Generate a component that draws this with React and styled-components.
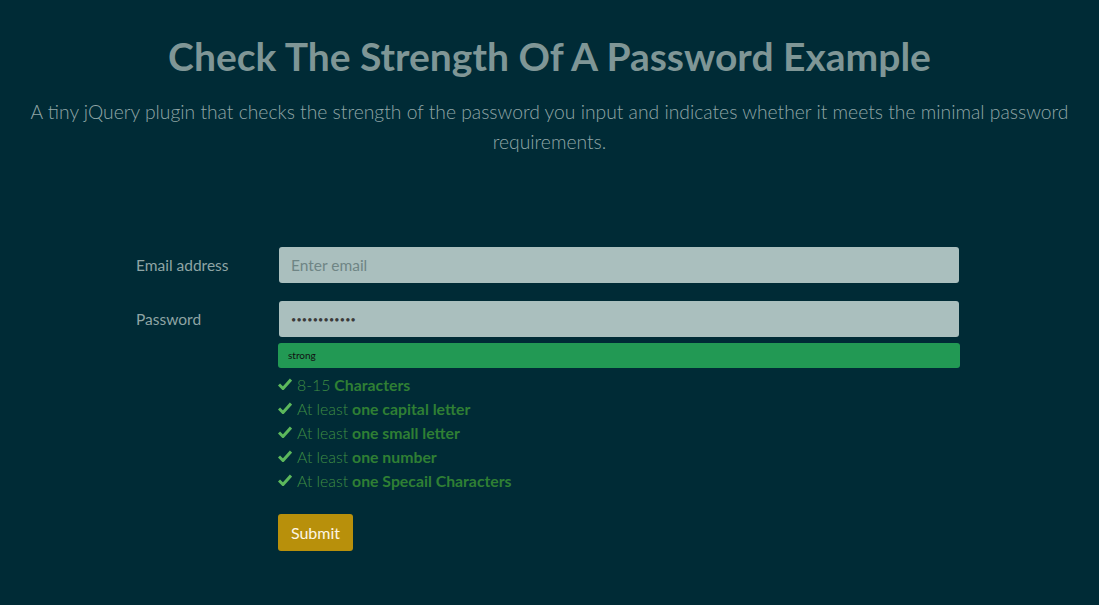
import React from "react";
import styled, { createGlobalStyle } from "styled-components";

const Global = createGlobalStyle`
  html, body { margin: 0; padding: 0; background: #002b36; }
  body { font-family: Lato, "Open Sans", sans-serif; color: #839496; }
  * { box-sizing: border-box; }
`;

const Page = styled.div`
  min-height: 605px;
  background: #002b36;
  padding-top: 32px;
`;

const Header = styled.header`
  text-align: center;
  padding: 0 20px;
`;

const Title = styled.h1`
  margin: 0;
  font-size: 39px;
  line-height: 48px;
  font-weight: 700;
  color: #7f9696;
`;

const Lead = styled.p`
  margin: 17px 0 0;
  font-size: 19.3px;
  line-height: 30px;
  font-weight: 300;
  color: #90a6a6;
`;

const Form = styled.form`
  width: 824px;
  margin: 90px 0 0 136px;
  display: flex;
  flex-direction: column;
`;

const Row = styled.div`
  display: grid;
  grid-template-columns: 143px 680px;
  align-items: start;
  margin-bottom: ${(p) => p.$gap || 0}px;
`;

const Label = styled.label`
  font-size: 15.5px;
  line-height: 36px;
  color: #8fa5a5;
`;

const Field = styled.div`
  display: flex;
  flex-direction: column;
`;

const Input = styled.input`
  width: 680px;
  height: 36px;
  border: none;
  border-radius: 3px;
  background: #aabfbe;
  padding: 0 12px;
  font-family: inherit;
  font-size: 15.5px;
  color: #444;
  outline: none;
  &::placeholder { color: #6f8585; }
  &[type="password"] {
    font-size: 9px;
    letter-spacing: 0.2px;
    color: #3a3a3a;
  }
`;

const Strength = styled.div`
  margin: 6px 0 0 -1px;
  width: 682px;
  height: 25px;
  border-radius: 3px;
  background: #229954;
  font-size: 10px;
  line-height: 25px;
  color: #111;
  padding-left: 10px;
`;

const Checks = styled.ul`
  list-style: none;
  margin: 4px 0 0 -1px;
  padding: 0;
`;

const Check = styled.li`
  display: flex;
  align-items: center;
  gap: 5px;
  height: 24px;
  font-size: 15.8px;
  color: #3f8d44;
  font-weight: 300;
  b { font-weight: 700; color: #2f7f34; margin-left: 4px; }
`;

const Submit = styled.button`
  margin: 22px 0 0 -1px;
  width: 75px;
  height: 37px;
  border: none;
  border-radius: 3px;
  background: #b8900b;
  color: #fdf6e3;
  font-family: inherit;
  font-size: 16px;
  cursor: pointer;
`;

const Tick = () => (
  <svg width="14" height="12" viewBox="0 0 14 12">
    <path d="M1 6.5 L5 10.5 L13 1.5" fill="none" stroke="#5cb85c" strokeWidth="3" strokeLinejoin="miter" />
  </svg>
);

const items = [
  ["8-15", "Characters"],
  ["At least", "one capital letter"],
  ["At least", "one small letter"],
  ["At least", "one number"],
  ["At least", "one Specail Characters"],
];

export default function App() {
  return (
    <Page>
      <Global />
      <Header>
        <Title>Check The Strength Of A Password Example</Title>
        <Lead>
          A tiny jQuery plugin that checks the strength of the password you input and indicates whether it meets the minimal password requirements.
        </Lead>
      </Header>
      <Form onSubmit={(e) => e.preventDefault()}>
        <Row $gap={18}>
          <Label>Email address</Label>
          <Input type="email" placeholder="Enter email" />
        </Row>
        <Row>
          <Label>Password</Label>
          <Field>
            <Input type="password" defaultValue="Abcdef1234!@" />
            <Strength>strong</Strength>
            <Checks>
              {items.map(([a, b]) => (
                <Check key={b}>
                  <Tick />
                  <span>{a}<b>{b}</b></span>
                </Check>
              ))}
            </Checks>
            <div>
              <Submit type="submit">Submit</Submit>
            </div>
          </Field>
        </Row>
      </Form>
    </Page>
  );
}
